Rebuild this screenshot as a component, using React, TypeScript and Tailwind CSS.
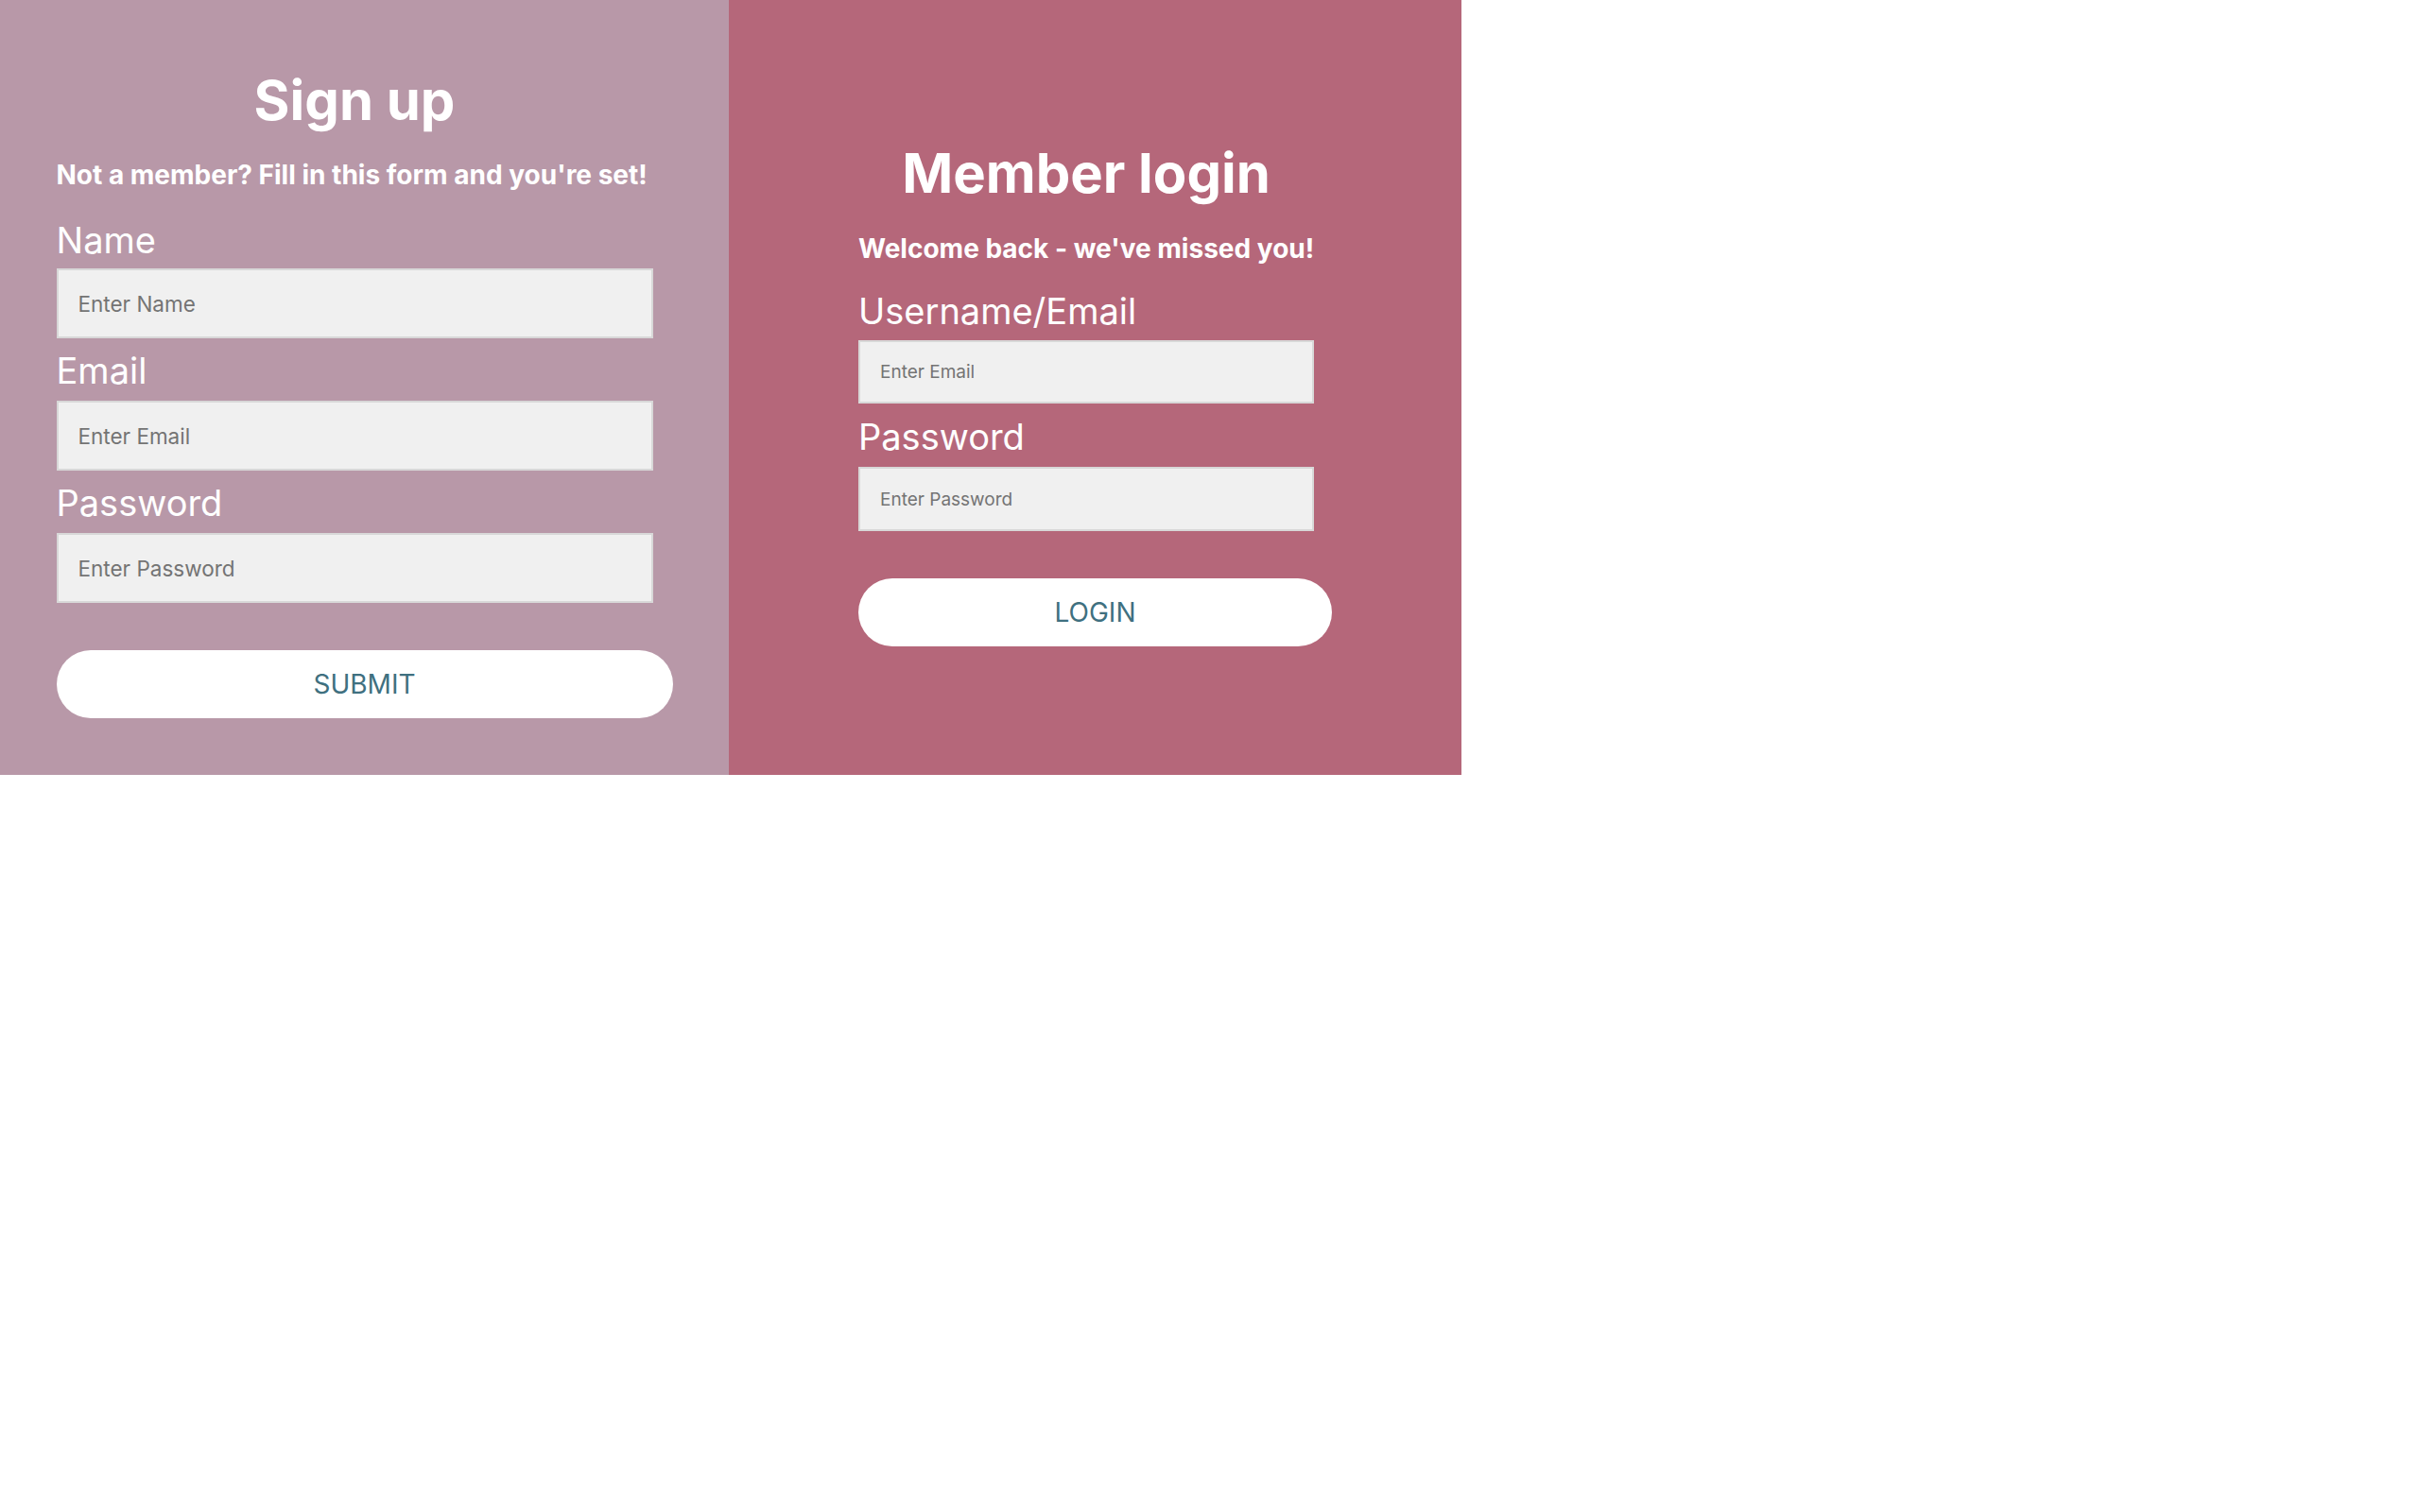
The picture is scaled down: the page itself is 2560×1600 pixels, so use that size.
import React from "react"

const font = { fontFamily: "Inter, 'Noto Sans', sans-serif" }

interface FieldProps {
  label: string
  placeholder: string
  inputClass: string
  labelClass?: string
}

const Field: React.FC<FieldProps> = ({ label, placeholder, inputClass, labelClass }) => (
  <>
    <label className={`block text-[38px] leading-none font-normal text-white ${labelClass ?? ""}`}>
      {label}
    </label>
    <input
      type="text"
      placeholder={placeholder}
      className={`block bg-[#f0f0f0] border-2 border-[#d8d8d8] outline-none text-[#555] placeholder:text-[#747474] ${inputClass}`}
    />
  </>
)

const App: React.FC = () => {
  return (
    <div className="flex w-[1546px]" style={font}>
      {/* Sign up */}
      <div className="w-[771px] bg-[#b898a8] flex justify-center pt-[77px] pb-[60px]">
        <div className="w-[652px] flex flex-col">
          <h1 className="w-[631px] text-center text-[58px] leading-none font-bold text-white">
            Sign up
          </h1>
          <p className="mt-[36px] text-[28px] leading-none font-bold text-white whitespace-nowrap">
            Not a member? Fill in this form and you're set!
          </p>

          <Field
            label="Name"
            placeholder="Enter Name"
            labelClass="mt-[36px]"
            inputClass="mt-[11px] w-[631px] h-[74px] px-[21px] text-[22.5px]"
          />
          <Field
            label="Email"
            placeholder="Enter Email"
            labelClass="mt-[15px]"
            inputClass="mt-[13px] w-[631px] h-[74px] px-[21px] text-[22.5px]"
          />
          <Field
            label="Password"
            placeholder="Enter Password"
            labelClass="mt-[15px]"
            inputClass="mt-[13px] w-[631px] h-[74px] px-[21px] text-[22.5px]"
          />

          <button className="mt-[50px] w-[652px] h-[72px] rounded-full bg-white text-[#3f7080] text-[28px] uppercase">
            Submit
          </button>
        </div>
      </div>

      {/* Member login */}
      <div className="w-[775px] bg-[#b5677a] flex justify-center pt-[154px]">
        <div className="w-[501px] flex flex-col">
          <h1 className="w-[482px] text-center text-[58px] leading-none font-bold text-white">
            Member login
          </h1>
          <p className="mt-[37px] text-[28px] leading-none font-bold text-white whitespace-nowrap">
            Welcome back - we've missed you!
          </p>

          <Field
            label="Username/Email"
            placeholder="Enter Email"
            labelClass="mt-[33px]"
            inputClass="mt-[12px] w-[482px] h-[67px] px-[21px] text-[19px]"
          />
          <Field
            label="Password"
            placeholder="Enter Password"
            labelClass="mt-[16px]"
            inputClass="mt-[13px] w-[482px] h-[68px] px-[21px] text-[19px]"
          />

          <button className="mt-[50px] w-[501px] h-[72px] rounded-full bg-white text-[#3f7080] text-[28px] uppercase">
            Login
          </button>
        </div>
      </div>
    </div>
  )
}

export default App
